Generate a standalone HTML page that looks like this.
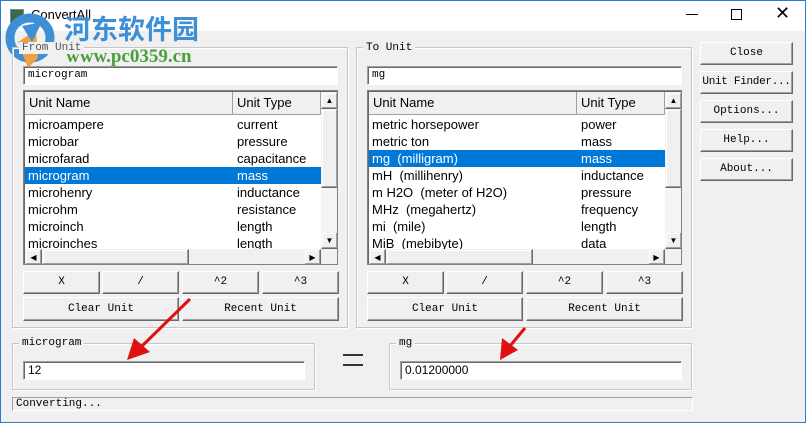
<!DOCTYPE html>
<html><head><meta charset="utf-8"><style>
*{box-sizing:border-box;margin:0;padding:0}
body{width:806px;height:423px;overflow:hidden;background:#f0f0f0;position:relative;font-family:"Liberation Sans",sans-serif}
.a{position:absolute}
.win{position:absolute;left:0;top:0;width:806px;height:423px;border:1px solid #2b7bd1;pointer-events:none}
.tb{position:absolute;left:0;top:0;width:806px;height:31px;background:#fff}
.m{font-family:"Liberation Mono","Noto Sans CJK SC",monospace;font-size:11px;color:#000}
.grp{position:absolute;border:1px solid #c6c6c6;box-shadow:inset 1px 1px #fff,1px 1px #fff}
.lab{position:absolute;background:#f0f0f0;padding:0 3px;font-family:"Liberation Mono",monospace;font-size:11px;line-height:12px}
.inp{position:absolute;background:#fff;border-top:1px solid #a0a0a0;border-left:1px solid #a0a0a0;border-right:1px solid #fff;border-bottom:1px solid #fff;box-shadow:inset 1px 1px #696969;font-family:"Liberation Mono",monospace;font-size:11px;line-height:16px;padding-left:4px}
.btn{position:absolute;background:#f0f0f0;border:1px solid;border-color:#fff #696969 #696969 #fff;box-shadow:inset -1px -1px #a0a0a0;font-family:"Liberation Mono",monospace;font-size:11px;text-align:center;white-space:nowrap}
.list{position:absolute;background:#fff;border:1px solid #828282;box-shadow:inset 1px 1px #696969;overflow:hidden}
.hd{position:absolute;top:1px;height:23px;background:#f0f0f0;border-right:1px solid #a0a0a0;border-bottom:1px solid #a0a0a0;font-size:13px;line-height:22px;padding-left:4px;color:#000}
.row{position:absolute;left:1px;height:17px;font-size:13px;line-height:17px;color:#000}
.row span{position:absolute;top:0}
.sel{background:#0078d7;color:#fff}
.sb{position:absolute;background:#f0f0f0;border:1px solid;border-color:#f0f0f0 #696969 #696969 #f0f0f0;box-shadow:inset -1px -1px #a0a0a0,inset 1px 1px #fff;font-size:8px;text-align:center;line-height:15px}
.trk{position:absolute;background:#f4f4f4}
</style></head><body>
<div class="tb"></div>
<div class="a" style="left:10px;top:9px;width:14px;height:14px;border:1px solid #7a8a9a;background:#3a6a4a"></div>
<div class="a" style="left:31px;top:7px;font-size:13px;color:#000">ConvertAll</div>
<div class="a" style="left:686px;top:14px;width:12px;height:1px;background:#000"></div>
<div class="a" style="left:731px;top:9px;width:11px;height:11px;border:1px solid #000"></div>
<div class="a" style="left:775px;top:3px;font-size:18px;color:#000">✕</div>
<!-- watermark -->
<svg class="a" style="left:2px;top:12px" width="60" height="58" viewBox="0 0 60 58">
<circle cx="28" cy="26" r="20" fill="none" stroke="#3d8fd6" stroke-width="9"/>
<path d="M16 30 L34 18 L36 46 L26 56 Z" fill="#f0a040"/>
<path d="M20 14 L40 10 L30 30 Z" fill="#3d8fd6"/>
</svg>
<div class="a" style="left:64px;top:13px;font-size:27px;font-weight:bold;color:#3d8fd6;font-family:'Noto Sans CJK SC',sans-serif;line-height:30px">河东软件园</div>
<div class="a" style="left:66px;top:46px;font-size:19px;font-weight:bold;color:#4aa03a;font-family:'Liberation Serif',serif">www.pc0359.cn</div>

<!-- From group -->
<div class="grp" style="left:12px;top:47px;width:336px;height:281px"></div>
<div class="lab" style="left:19px;top:42px;color:#555">From Unit</div>
<div class="inp" style="left:23px;top:66px;width:315px;height:19px">microgram</div>
<div class="list" style="left:23px;top:90px;width:315px;height:175px">
 <div class="hd" style="left:1px;width:208px">Unit Name</div>
 <div class="hd" style="left:209px;width:88px">Unit Type</div>
 <div class="row" style="top:25px;width:296px"><span style="left:3px">microampere</span><span style="left:212px">current</span></div>
 <div class="row" style="top:42px;width:296px"><span style="left:3px">microbar</span><span style="left:212px">pressure</span></div>
 <div class="row" style="top:59px;width:296px"><span style="left:3px">microfarad</span><span style="left:212px">capacitance</span></div>
 <div class="row sel" style="top:76px;width:296px"><span style="left:3px">microgram</span><span style="left:212px">mass</span></div>
 <div class="row" style="top:93px;width:296px"><span style="left:3px">microhenry</span><span style="left:212px">inductance</span></div>
 <div class="row" style="top:110px;width:296px"><span style="left:3px">microhm</span><span style="left:212px">resistance</span></div>
 <div class="row" style="top:127px;width:296px"><span style="left:3px">microinch</span><span style="left:212px">length</span></div>
 <div class="row" style="top:144px;width:296px"><span style="left:3px">microinches</span><span style="left:212px">length</span></div>
 <div class="trk" style="left:297px;top:1px;width:17px;height:157px"></div>
 <div class="sb" style="left:297px;top:1px;width:17px;height:17px">▲</div>
 <div class="sb" style="left:297px;top:18px;width:17px;height:79px"></div>
 <div class="sb" style="left:297px;top:141px;width:17px;height:17px">▼</div>
 <div class="trk" style="left:1px;top:158px;width:313px;height:16px;background:#f0f0f0"></div>
 <div class="sb" style="left:1px;top:158px;width:17px;height:16px">◀</div>
 <div class="sb" style="left:18px;top:158px;width:147px;height:16px"></div>
 <div class="sb" style="left:280px;top:158px;width:17px;height:16px">▶</div>
</div>
<div class="btn" style="left:23px;top:271px;width:77px;height:23px;line-height:21px">X</div>
<div class="btn" style="left:102px;top:271px;width:77px;height:23px;line-height:21px">/</div>
<div class="btn" style="left:182px;top:271px;width:77px;height:23px;line-height:21px">^2</div>
<div class="btn" style="left:262px;top:271px;width:77px;height:23px;line-height:21px">^3</div>
<div class="btn" style="left:23px;top:297px;width:156px;height:24px;line-height:22px">Clear Unit</div>
<div class="btn" style="left:182px;top:297px;width:157px;height:24px;line-height:22px">Recent Unit</div>

<!-- To group -->
<div class="grp" style="left:356px;top:47px;width:336px;height:281px"></div>
<div class="lab" style="left:363px;top:42px">To Unit</div>
<div class="inp" style="left:367px;top:66px;width:315px;height:19px">mg</div>
<div class="list" style="left:367px;top:90px;width:315px;height:175px">
 <div class="hd" style="left:1px;width:208px">Unit Name</div>
 <div class="hd" style="left:209px;width:88px">Unit Type</div>
 <div class="row" style="top:25px;width:296px"><span style="left:3px">metric horsepower</span><span style="left:212px">power</span></div>
 <div class="row" style="top:42px;width:296px"><span style="left:3px">metric ton</span><span style="left:212px">mass</span></div>
 <div class="row sel" style="top:59px;width:296px"><span style="left:3px">mg&nbsp; (milligram)</span><span style="left:212px">mass</span></div>
 <div class="row" style="top:76px;width:296px"><span style="left:3px">mH&nbsp; (millihenry)</span><span style="left:212px">inductance</span></div>
 <div class="row" style="top:93px;width:296px"><span style="left:3px">m H2O&nbsp; (meter of H2O)</span><span style="left:212px">pressure</span></div>
 <div class="row" style="top:110px;width:296px"><span style="left:3px">MHz&nbsp; (megahertz)</span><span style="left:212px">frequency</span></div>
 <div class="row" style="top:127px;width:296px"><span style="left:3px">mi&nbsp; (mile)</span><span style="left:212px">length</span></div>
 <div class="row" style="top:144px;width:296px"><span style="left:3px">MiB&nbsp; (mebibyte)</span><span style="left:212px">data</span></div>
 <div class="trk" style="left:297px;top:1px;width:17px;height:157px"></div>
 <div class="sb" style="left:297px;top:1px;width:17px;height:17px">▲</div>
 <div class="sb" style="left:297px;top:18px;width:17px;height:79px"></div>
 <div class="sb" style="left:297px;top:141px;width:17px;height:17px">▼</div>
 <div class="trk" style="left:1px;top:158px;width:313px;height:16px;background:#f0f0f0"></div>
 <div class="sb" style="left:1px;top:158px;width:17px;height:16px">◀</div>
 <div class="sb" style="left:18px;top:158px;width:147px;height:16px"></div>
 <div class="sb" style="left:280px;top:158px;width:17px;height:16px">▶</div>
</div>
<div class="btn" style="left:367px;top:271px;width:77px;height:23px;line-height:21px">X</div>
<div class="btn" style="left:446px;top:271px;width:77px;height:23px;line-height:21px">/</div>
<div class="btn" style="left:526px;top:271px;width:77px;height:23px;line-height:21px">^2</div>
<div class="btn" style="left:606px;top:271px;width:77px;height:23px;line-height:21px">^3</div>
<div class="btn" style="left:367px;top:297px;width:156px;height:24px;line-height:22px">Clear Unit</div>
<div class="btn" style="left:526px;top:297px;width:157px;height:24px;line-height:22px">Recent Unit</div>

<!-- right buttons -->
<div class="btn" style="left:700px;top:42px;width:93px;height:23px;line-height:21px">Close</div>
<div class="btn" style="left:700px;top:71px;width:93px;height:23px;line-height:21px;letter-spacing:-0.3px">Unit Finder...</div>
<div class="btn" style="left:700px;top:100px;width:93px;height:23px;line-height:21px">Options...</div>
<div class="btn" style="left:700px;top:129px;width:93px;height:23px;line-height:21px">Help...</div>
<div class="btn" style="left:700px;top:158px;width:93px;height:23px;line-height:21px">About...</div>

<!-- bottom -->
<div class="grp" style="left:12px;top:343px;width:303px;height:47px"></div>
<div class="lab" style="left:19px;top:337px">microgram</div>
<div class="inp" style="left:23px;top:361px;width:282px;height:19px;font-family:'Liberation Sans',sans-serif;font-size:12px">12</div>
<div class="a" style="left:343px;top:354px;width:20px;height:2px;background:#333"></div>
<div class="a" style="left:343px;top:364px;width:20px;height:2px;background:#333"></div>
<div class="grp" style="left:389px;top:343px;width:303px;height:47px"></div>
<div class="lab" style="left:396px;top:337px">mg</div>
<div class="inp" style="left:400px;top:361px;width:282px;height:19px;font-family:'Liberation Sans',sans-serif;font-size:12px">0.01200000</div>
<div class="a m" style="left:12px;top:397px;width:681px;height:14px;border:1px solid;border-color:#a0a0a0 #fff #fff #a0a0a0;line-height:12px;padding-left:3px">Converting...</div>

<!-- arrows -->
<svg class="a" style="left:0;top:0" width="806" height="423">
<line x1="190" y1="299" x2="140" y2="348" stroke="#e01010" stroke-width="3"/>
<polygon points="127,360 134,338 150,352" fill="#e01010"/>
<line x1="525" y1="328" x2="510" y2="346" stroke="#e01010" stroke-width="3"/>
<polygon points="500,360 502,338 518,350" fill="#e01010"/>
</svg>
<div class="win"></div>
</body></html>
